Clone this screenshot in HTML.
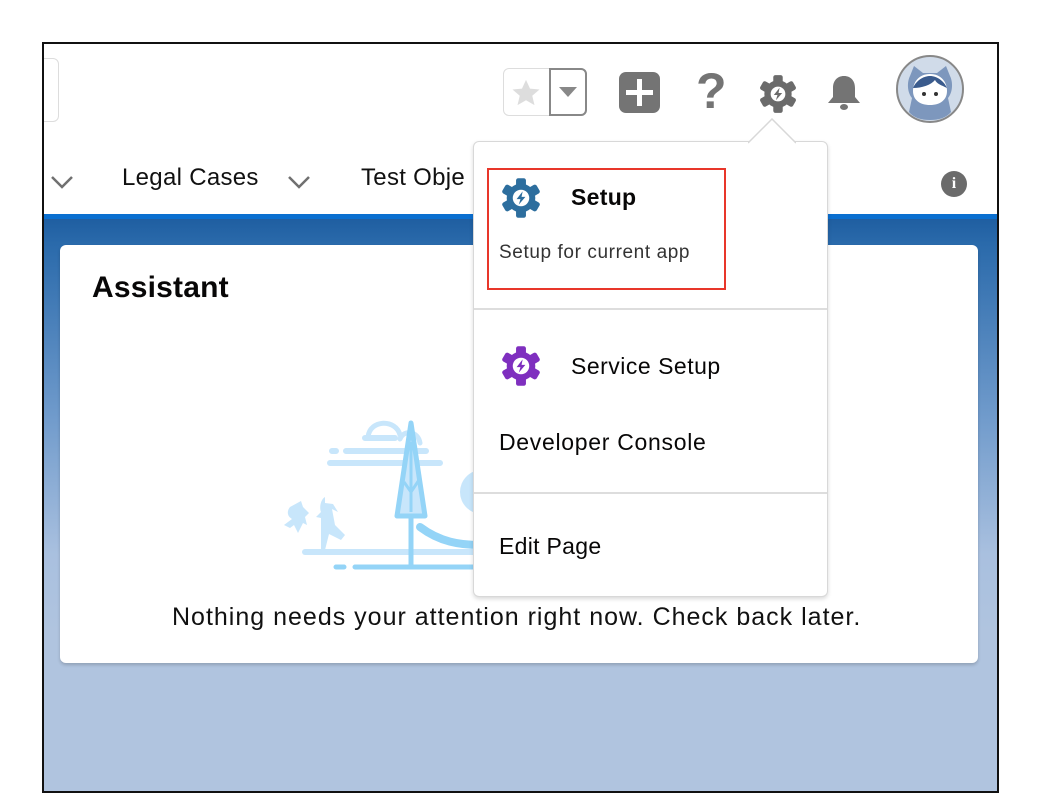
<!DOCTYPE html>
<html><head><meta charset="utf-8"><style>
*{margin:0;padding:0;box-sizing:border-box}
body{width:1042px;height:794px;background:#fff;position:relative;overflow:hidden;font-family:"Liberation Sans",sans-serif;color:#080707}
.frame{position:absolute;left:42px;top:42px;width:957px;height:751px;border:2px solid #111;overflow:hidden;background:#fff}
.abs{position:absolute}
.bg{position:absolute;left:0;top:170px;width:100%;height:590px;background:linear-gradient(#1d5c9f 0px,#2a6aab 30px,#6f9acb 200px,#a9c0df 340px,#b0c4df 420px)}
.bg:before{content:"";position:absolute;left:0;top:0;width:100%;height:5px;background:#0a6fd0}
.card{position:absolute;left:16px;top:201px;width:918px;height:418px;background:#fff;border-radius:6px;box-shadow:0 2px 3px rgba(0,0,0,.18)}
.dd{position:absolute;left:429px;top:97px;width:355px;height:456px;background:#fff;border:1px solid #d8d8d8;border-radius:6px;box-shadow:0 2px 4px rgba(0,0,0,.15)}
.hr{position:absolute;left:0;width:100%;height:2px;background:#ddd}
.t{position:absolute;white-space:nowrap}
</style></head><body>
<div class="frame">
  <div class="abs" style="left:-10px;top:14px;width:25px;height:64px;border:1px solid #ddd;border-radius:6px"></div>
  <div class="abs" style="left:459px;top:24px;width:84px;height:48px;border:1px solid #ddd;border-radius:6px"></div>
  <div class="abs" style="left:505px;top:24px;width:38px;height:48px;border:2px solid #888;border-radius:0 6px 6px 0"></div>
  <svg class="abs" style="left:466px;top:34px" width="32" height="30" viewBox="0 0 24 24"><path d="M12 1.5l3.2 7 7.6.7-5.8 5 1.8 7.5L12 17.8 5.2 21.7 7 14.2 1.2 9.2l7.6-.7z" fill="#ddd"/></svg>
  <svg class="abs" style="left:514px;top:42px" width="20" height="12"><path d="M1 1h18L10 11z" fill="#888"/></svg>
  <div class="abs" style="left:575px;top:28px;width:41px;height:41px;background:#747474;border-radius:7px"></div>
  <div class="abs" style="left:582px;top:46px;width:27px;height:5px;background:#fff"></div>
  <div class="abs" style="left:593px;top:35px;width:5px;height:27px;background:#fff"></div>
  <div class="t" style="left:652px;top:18px;font-size:50px;color:#747474;font-weight:bold">?</div>
  <svg class="abs" style="left:713px;top:29px" width="42" height="42" viewBox="-20 -20 40 40">
    <g fill="#6b6b6b"><circle r="13"/><rect x="-4.5" y="-18" width="9" height="36" rx="2"/><rect x="-4.5" y="-18" width="9" height="36" rx="2" transform="rotate(60)"/><rect x="-4.5" y="-18" width="9" height="36" rx="2" transform="rotate(120)"/></g>
    <circle r="7" fill="#fff"/><path d="M1.5-6L-4 1h3.5L-2 6 4-1H.5z" fill="#6b6b6b"/></svg>
  <svg class="abs" style="left:778px;top:30px" width="44" height="40" viewBox="0 0 44 40"><path d="M22 2c-7 0-11 5-11 12v9l-5 6h32l-5-6v-9c0-7-4-12-11-12z" fill="#747474"/><ellipse cx="22" cy="33" rx="4" ry="3" fill="#747474"/></svg>
  <svg class="abs" style="left:851px;top:10px" width="70" height="70" viewBox="0 0 70 70">
    <circle cx="35" cy="35" r="33" fill="#d0dbe9" stroke="#888" stroke-width="2"/>
    <path d="M15 22l4-10 9 7h14l9-7 4 10c3 6 3 16-2 22l3 14c-5 6-12 8-21 8s-16-2-21-8l3-14c-5-6-5-16-2-22z" fill="#7d97bd"/>
    <path d="M35 20c-11 0-17 8-17 17 0 9 7 14 17 14s17-5 17-14c0-9-6-17-17-17z" fill="#fff"/>
    <path d="M18 34c4-9 12-12 17-12 7 0 14 5 17 12-6-3-10-4-12-8-4 5-13 8-22 8z" fill="#3a5b8d"/>
    <circle cx="29" cy="40" r="2" fill="#333"/><circle cx="41" cy="40" r="2" fill="#333"/>
  </svg>
  <svg class="abs" style="left:6px;top:130px" width="24" height="16"><path d="M2 3l10 10L22 3" stroke="#707070" stroke-width="2.5" fill="none"/></svg>
  <div class="t" style="left:78px;top:120px;font-size:24px;color:#111;letter-spacing:.3px">Legal Cases</div>
  <svg class="abs" style="left:243px;top:130px" width="24" height="16"><path d="M2 3l10 10L22 3" stroke="#707070" stroke-width="2.5" fill="none"/></svg>
  <div class="t" style="left:317px;top:120px;font-size:24px;color:#111;letter-spacing:.3px">Test Obje</div>
  <div class="abs" style="left:897px;top:127px;width:26px;height:26px;border-radius:50%;background:#6b6b6b;color:#fff;font-weight:bold;font-size:16px;text-align:center;line-height:26px;font-family:'Liberation Serif',serif">i</div>
  <div class="bg"></div>
  <div class="card">
    <div class="t" style="left:32px;top:26px;font-size:30px;font-weight:bold;letter-spacing:.2px">Assistant</div>
    <svg class="abs" style="left:196px;top:152px" width="240" height="180" viewBox="256 395 240 180">
      <g stroke="#c8e6fb" stroke-linecap="round" stroke-width="6" fill="none">
        <path d="M346 449h80M332 449h4M330 461h110M365 436h30"/>
        <path d="M368 435c2-18 28-18 32 -2M400 437c4-10 18-8 20 4" stroke-width="5"/>
        <path d="M305 550h170"/>
      </g>
      <g stroke="#94d4f7" stroke-linecap="round" stroke-width="5" fill="none">
        <path d="M336 565h8M355 565h130"/>
        <path d="M411 565v-100"/>
        <path d="M420 525c20 15 40 18 60 18" stroke-width="8"/>
      </g>
      <path d="M411 421L397 514h28z" fill="#c8e6fb" stroke="#94d4f7" stroke-width="5" stroke-linejoin="round"/>
      <path d="M411 440v70M404 480l7 10 8-12" stroke="#94d4f7" stroke-width="3" fill="none"/>
      <circle cx="482" cy="490" r="22" fill="#c8e6fb"/>
      <path d="M290 505c-4 5-2 10 2 12l-8 6 6 3 4-3 4 8 5-10 4 2-2-8 4-4-6-6-2-6z" fill="#c8e6fb"/>
      <path d="M325 495c-4 2-6 10-4 15l-5 5 5 1 0 32 4 0 4-16 12 6 4-5-10-10-3-16 6 3-5-8-8-1z" fill="#c8e6fb"/>
    </svg>
    <div class="t" style="left:112px;top:358px;font-size:25px;color:#111;letter-spacing:1px">Nothing needs your attention right now. Check back later.</div>
  </div>
  <div class="dd">
    <div class="abs" style="left:13px;top:26px;width:239px;height:122px;border:2px solid #e8362a"></div>
    <svg class="abs" style="left:25px;top:34px" width="44" height="44" viewBox="-20 -20 40 40">
      <g fill="#2d6e9e"><circle r="13"/><rect x="-4.5" y="-18" width="9" height="36" rx="2"/><rect x="-4.5" y="-18" width="9" height="36" rx="2" transform="rotate(60)"/><rect x="-4.5" y="-18" width="9" height="36" rx="2" transform="rotate(120)"/></g>
      <circle r="7.5" fill="#fff"/><path d="M1.5-6L-4 1h3.5L-2 6 4-1H.5z" fill="#2d6e9e"/></svg>
    <div class="t" style="left:97px;top:42px;font-size:23px;font-weight:bold;letter-spacing:.3px">Setup</div>
    <div class="t" style="left:25px;top:100px;font-size:19px;color:#333;letter-spacing:.6px">Setup for current app</div>
    <div class="hr" style="top:166px"></div>
    <svg class="abs" style="left:25px;top:202px" width="44" height="44" viewBox="-20 -20 40 40">
      <g fill="#7f2fbf"><circle r="13"/><rect x="-4.5" y="-18" width="9" height="36" rx="2"/><rect x="-4.5" y="-18" width="9" height="36" rx="2" transform="rotate(60)"/><rect x="-4.5" y="-18" width="9" height="36" rx="2" transform="rotate(120)"/></g>
      <circle r="7.5" fill="#fff"/><path d="M1.5-6L-4 1h3.5L-2 6 4-1H.5z" fill="#7f2fbf"/></svg>
    <div class="t" style="left:97px;top:211px;font-size:23px;letter-spacing:.5px">Service Setup</div>
    <div class="t" style="left:25px;top:287px;font-size:23px;letter-spacing:.7px">Developer Console</div>
    <div class="hr" style="top:350px"></div>
    <div class="t" style="left:25px;top:391px;font-size:23px;letter-spacing:.3px">Edit Page</div>
  </div>
  <svg class="abs" style="left:704px;top:74px" width="48" height="26"><path d="M0 25L24 1l24 24" fill="#fff" stroke="#d8d8d8" stroke-width="1.5"/></svg>
</div>
</body></html>
